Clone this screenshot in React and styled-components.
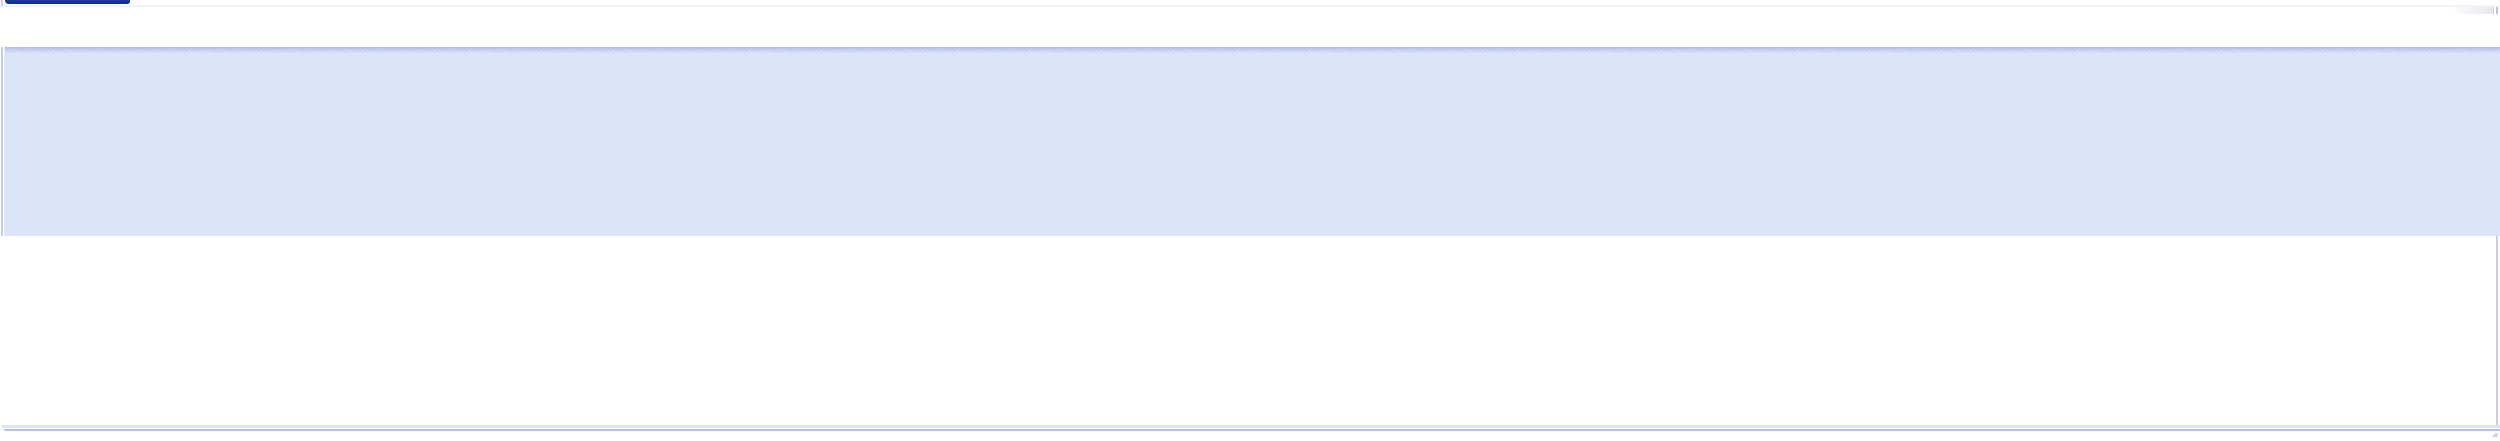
import React from 'react';
import styled, { createGlobalStyle } from 'styled-components';

const GlobalStyle = createGlobalStyle`
  html, body {
    margin: 0;
    padding: 0;
    background: #ffffff;
    font-family: "Liberation Sans", Arial, sans-serif;
  }
`;

const Page = styled.div`
  width: 2500px;
  height: 441px;
  display: flex;
  flex-direction: column;
  overflow: hidden;
  background: #ffffff;
`;

// top tab strip
const TabStrip = styled.div`
  height: 47px;
  display: flex;
  flex-direction: column;
`;

const TabRow = styled.div`
  height: 5px;
  display: flex;
  align-items: flex-start;
  padding-left: 1px;
  gap: 2px;
  border-bottom: 2px solid #f2f3f6;
`;

const EdgeLine = styled.div`
  width: 2px;
  height: 6px;
  background: #cfd3ee;
`;

const ActiveTab = styled.div`
  width: 125px;
  height: 4px;
  background: linear-gradient(180deg, #1a3a99 0%, #0b2a85 100%);
  border-radius: 0 0 3px 5px;
`;

const ToolRow = styled.div`
  display: flex;
  justify-content: flex-end;
  align-items: flex-start;
  gap: 2px;
`;

const GripBox = styled.div`
  width: 38px;
  height: 7px;
  background: linear-gradient(90deg, #fbfbfc 0%, #e6e8ec 100%);
  border-right: 1px solid #cfd1d6;
`;

const GripMark = styled.div`
  width: 2px;
  height: 7px;
  background: #bcbfea;
  margin-right: 2px;
`;

const Panel = styled.div`
  display: flex;
  flex-direction: column;
`;

const Band = styled.div`
  height: 189px;
  display: flex;
`;

const LeftRail = styled.div`
  width: 5px;
  display: flex;
  gap: 1px;
  padding-left: 1px;
  box-sizing: border-box;
`;

const RailLine = styled.div`
  width: 2px;
  background: ${({ light }) => (light ? '#e8ebf8' : '#c6cbea')};
`;

const BandFill = styled.div`
  flex: 1;
  background:
    repeating-linear-gradient(45deg, rgba(255,255,255,0.18) 0 1px, transparent 1px 3px) top / 100% 7px no-repeat,
    linear-gradient(180deg, #a7b4e3 0px, #c3cdf0 3px, #d6def6 6px, #dce4f7 7px) top / 100% 7px no-repeat,
    #dce4f7;
`;

const Body = styled.div`
  height: 189px;
  display: flex;
  justify-content: flex-end;
`;

const RightRail = styled.div`
  width: 2px;
  background: #c6cbea;
  margin-right: 2px;
`;

const Footer = styled.div`
  margin-left: 2px;
  height: 6px;
  border-radius: 0 0 0 5px;
  background: linear-gradient(180deg, #dce4f7 0px, #dce4f7 3px, #ffffff 3px, #ffffff 4px, #b9bee9 4px, #b9bee9 6px);
  position: relative;
`;

const Corner = styled.div`
  position: absolute;
  right: 2px;
  top: 8px;
  width: 8px;
  height: 4px;
  background: linear-gradient(135deg, transparent 45%, #cfd3ec 45%);
`;

function App() {
  return (
    <>
      <GlobalStyle />
      <Page>
        <TabStrip>
          <TabRow>
            <EdgeLine />
            <ActiveTab />
          </TabRow>
          <ToolRow>
            <GripBox />
            <GripMark />
          </ToolRow>
        </TabStrip>
        <Panel>
          <Band>
            <LeftRail>
              <RailLine />
              <RailLine light />
            </LeftRail>
            <BandFill />
          </Band>
          <Body>
            <RightRail />
          </Body>
          <Footer>
            <Corner />
          </Footer>
        </Panel>
      </Page>
    </>
  );
}

export default App;
